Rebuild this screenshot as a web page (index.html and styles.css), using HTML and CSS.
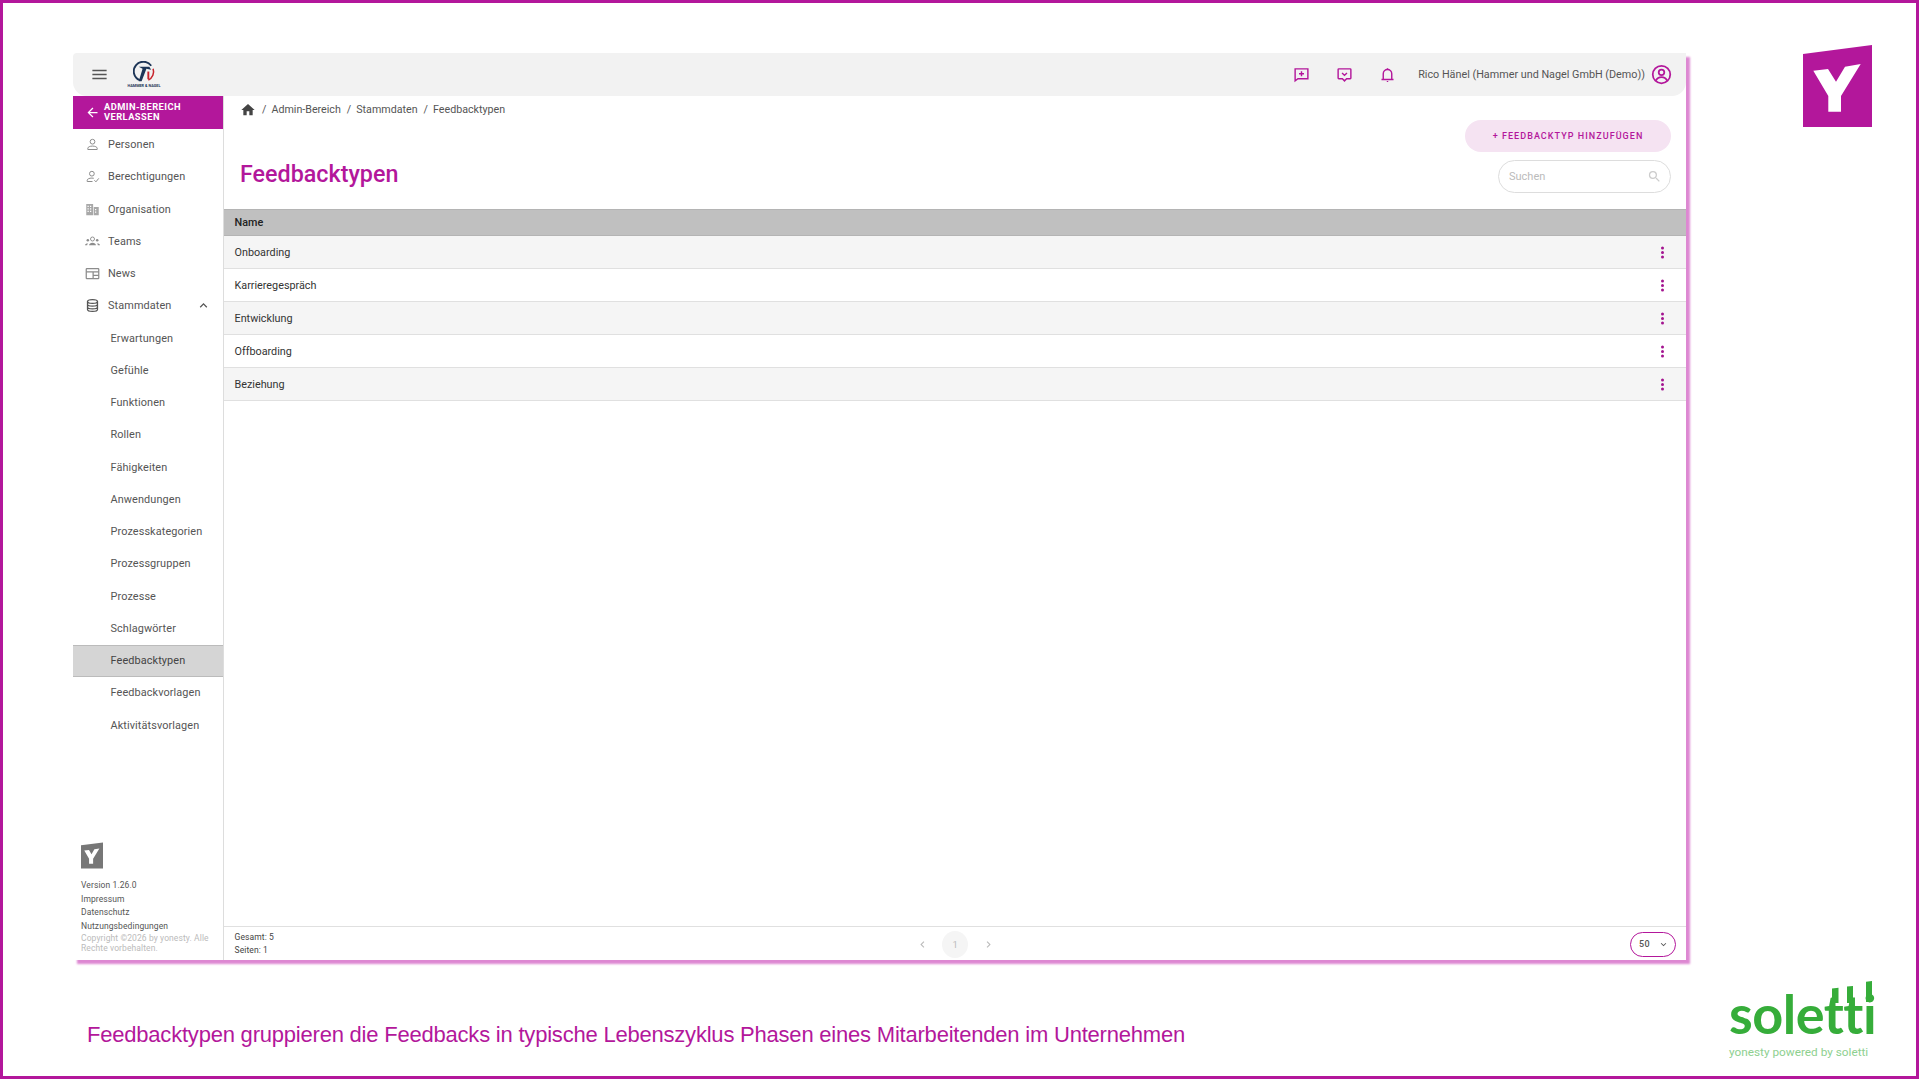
FILE: index.html
```html
<!DOCTYPE html>
<html lang="de">
<head>
<meta charset="utf-8">
<title>Feedbacktypen</title>
<link rel="stylesheet" href="styles.css">
</head>
<body>
<div class="slide">
  <div class="stage">
    <div class="app">
      <header class="topbar">
        <div class="topbar-left">
          <svg class="ico-menu" viewBox="0 0 24 24"><path d="M3 18h18v-2H3v2zm0-5h18v-2H3v2zm0-7v2h18V6H3z"/></svg>
          <div class="brand">
            <svg class="brand-mark" viewBox="0 0 24 24" fill="none">
              <path d="M7 20A10 10 0 1 1 19 5" stroke="#1d3557" stroke-width="2"/>
              <path d="M21 8a10 10 0 0 1-5 12" stroke="#c8242c" stroke-width="1.6"/>
              <path d="M6 6h11l2 3-5-1-5 13H6l4-13z" fill="#1d3557"/>
              <path d="M15 11h2v8h-2z" fill="#c8242c"/>
            </svg>
            <span class="brand-name">HAMMER &amp; NAGEL</span>
          </div>
        </div>
        <div class="topbar-right">
          <svg class="ico-top" viewBox="0 0 24 24" fill="none" stroke="currentColor" stroke-width="2"><path d="M3 4h18v14H7l-4 3z"/><path d="M12 7.500v7M8.500 11h7"/></svg>
          <svg class="ico-top" viewBox="0 0 24 24" fill="none" stroke="currentColor" stroke-width="2"><path d="M4 4h16a1 1 0 0 1 1 1v12a1 1 0 0 1-1 1h-5l-3 3-3-3H4a1 1 0 0 1-1-1V5a1 1 0 0 1 1-1z"/><path d="M8.500 10l3.500 3 3.500-3"/></svg>
          <svg class="ico-top" viewBox="0 0 24 24" fill="none" stroke="currentColor" stroke-width="2"><path d="M3.500 19h17M6 19v-8a6 6 0 0 1 12 0v8"/><path d="M12 3v2M12 21v1.500"/></svg>
          <span class="user-name">Rico Hänel (Hammer und Nagel GmbH (Demo))</span>
          <svg class="ico-user" viewBox="0 0 24 24" fill="none" stroke="currentColor" stroke-width="2"><circle cx="12" cy="12" r="10"/><circle cx="12" cy="9.500" r="3.200"/><path d="M5.500 19c1.500-3 4-4 6.500-4s5 1 6.500 4"/></svg>
        </div>
      </header>
      <div class="body">
        <aside class="sidebar">
          <a class="leave">
            <svg class="ico-leave" viewBox="0 0 24 24"><path d="M20 11H7.830l5.590-5.590L12 4l-8 8 8 8 1.410-1.410L7.830 13H20v-2z"/></svg>
            <span>ADMIN-BEREICH VERLASSEN</span>
          </a>
          <nav class="nav">
            <a class="nav-item">
              <svg class="ico-nav" viewBox="0 0 24 24" fill="none" stroke="currentColor" stroke-width="1.6"><circle cx="12" cy="7.500" r="3.800"/><path d="M4.500 20v-2c0-2 3.500-3.500 7.500-3.500s7.500 1.500 7.500 3.500v2z"/></svg>
              <span>Personen</span>
            </a>
            <a class="nav-item">
              <svg class="ico-nav" viewBox="0 0 24 24" fill="none" stroke="currentColor" stroke-width="1.6"><circle cx="11" cy="7.500" r="3.800"/><path d="M3.500 20v-2c0-2 3.500-3.500 7.500-3.500 1 0 2 .1 3 .3M3.500 20H12M15 18l2.500 2.500L22 15"/></svg>
              <span>Berechtigungen</span>
            </a>
            <a class="nav-item">
              <svg class="ico-nav" viewBox="0 0 24 24"><path d="M2 3h11v18H2zM14 8h8v13h-8z" fill="#a8a8a8"/><path d="M4 6h2v2H4zM8 6h2v2H8zM4 10h2v2H4zM8 10h2v2H8zM4 14h2v2H4zM8 14h2v2H8zM16 11h2v2h-2zM16 15h2v2h-2z" fill="#fff"/></svg>
              <span>Organisation</span>
            </a>
            <a class="nav-item">
              <svg class="ico-nav" viewBox="0 0 24 24" fill="currentColor"><circle cx="12" cy="8" r="3.200" fill="none" stroke="currentColor" stroke-width="1.500"/><circle cx="4.500" cy="10" r="2"/><circle cx="19.500" cy="10" r="2"/><path d="M6.500 18c0-2.500 2.500-4 5.500-4s5.500 1.500 5.500 4zM0 18c0-2 2-3 4-3l1 .3C4 16 3.500 17 3.500 18zM24 18c0-2-2-3-4-3l-1 .3c1 .7 1.500 1.700 1.500 2.700z"/></svg>
              <span>Teams</span>
            </a>
            <a class="nav-item">
              <svg class="ico-nav" viewBox="0 0 24 24" fill="none" stroke="currentColor" stroke-width="2"><rect x="2" y="4" width="20" height="16" rx="1"/><path d="M2 9.500h20M13 9.500V20M13 15h9"/></svg>
              <span>News</span>
            </a>
            <a class="nav-item nav-open">
              <svg class="ico-nav" viewBox="0 0 24 24" fill="none" stroke="currentColor" stroke-width="2"><ellipse cx="12" cy="5.500" rx="8" ry="3"/><path d="M4 5.500v13c0 1.700 3.600 3 8 3s8-1.300 8-3v-13M4 10c0 1.700 3.600 3 8 3s8-1.300 8-3M4 14.500c0 1.700 3.600 3 8 3s8-1.300 8-3"/></svg>
              <span>Stammdaten</span>
              <svg class="ico-chev" viewBox="0 0 24 24"><path d="M12 8l-6 6 1.410 1.410L12 10.830l4.590 4.580L18 14z"/></svg>
            </a>
            <a class="nav-sub">Erwartungen</a>
            <a class="nav-sub">Gefühle</a>
            <a class="nav-sub">Funktionen</a>
            <a class="nav-sub">Rollen</a>
            <a class="nav-sub">Fähigkeiten</a>
            <a class="nav-sub">Anwendungen</a>
            <a class="nav-sub">Prozesskategorien</a>
            <a class="nav-sub">Prozessgruppen</a>
            <a class="nav-sub">Prozesse</a>
            <a class="nav-sub">Schlagwörter</a>
            <a class="nav-sub is-active">Feedbacktypen</a>
            <a class="nav-sub">Feedbackvorlagen</a>
            <a class="nav-sub">Aktivitätsvorlagen</a>
          </nav>
          <div class="side-foot">
            <svg class="side-logo" viewBox="0 0 69 82"><path d="M0 9L69 0v82H0z" fill="#777"/><path d="M10.300 25.700L25 24l8 12.700L42 21.700 57.700 19 38 51v15.700H25.300V51z" fill="#fff"/></svg>
            <div class="foot-links">
              <span>Version 1.26.0</span>
              <span>Impressum</span>
              <span>Datenschutz</span>
              <span>Nutzungsbedingungen</span>
            </div>
            <p class="copyright">Copyright ©2026 by yonesty. Alle Rechte vorbehalten.</p>
          </div>
        </aside>
        <main class="main">
          <div class="crumbs">
            <svg class="ico-home" viewBox="0 0 24 24"><path d="M10 20v-6h4v6h5v-8h3L12 3 2 12h3v8z"/></svg>
            <span class="sep">/</span><span>Admin-Bereich</span>
            <span class="sep">/</span><span>Stammdaten</span>
            <span class="sep">/</span><span>Feedbacktypen</span>
          </div>
          <div class="head">
            <h1 class="title">Feedbacktypen</h1>
            <div class="actions">
              <button class="btn-add">+ FEEDBACKTYP HINZUFÜGEN</button>
              <div class="search">
                <span>Suchen</span>
                <svg class="ico-search" viewBox="0 0 24 24"><path d="M15.500 14h-.790l-.280-.270A6.470 6.470 0 0 0 16 9.500 6.500 6.500 0 1 0 9.500 16c1.610 0 3.090-.590 4.230-1.570l.270.280v.790l5 4.990L20.490 19l-4.990-5zm-6 0C7.010 14 5 11.990 5 9.500S7.010 5 9.500 5 14 7.010 14 9.500 11.990 14 9.500 14z"/></svg>
              </div>
            </div>
          </div>
          <div class="table">
            <div class="thead">Name</div>
            <div class="row"><span>Onboarding</span><i class="kebab"></i></div>
            <div class="row"><span>Karrieregespräch</span><i class="kebab"></i></div>
            <div class="row"><span>Entwicklung</span><i class="kebab"></i></div>
            <div class="row"><span>Offboarding</span><i class="kebab"></i></div>
            <div class="row"><span>Beziehung</span><i class="kebab"></i></div>
          </div>
          <footer class="pager">
            <div class="totals"><span>Gesamt: 5</span><span>Seiten: 1</span></div>
            <div class="pages">
              <svg class="ico-page" viewBox="0 0 24 24"><path d="M15.410 7.410L14 6l-6 6 6 6 1.410-1.410L10.830 12z"/></svg>
              <span class="page-num">1</span>
              <svg class="ico-page" viewBox="0 0 24 24"><path d="M10 6L8.590 7.410 13.170 12l-4.580 4.590L10 18l6-6z"/></svg>
            </div>
            <div class="size">
              <span>50</span>
              <svg class="ico-size" viewBox="0 0 24 24"><path d="M16.590 8.590L12 13.170 7.410 8.590 6 10l6 6 6-6z"/></svg>
            </div>
          </footer>
        </main>
      </div>
    </div>
    <p class="caption">Feedbacktypen gruppieren die Feedbacks in typische Lebenszyklus Phasen eines Mitarbeitenden im Unternehmen</p>
  </div>
  <aside class="brand-col">
    <svg class="y-logo" viewBox="0 0 69 82"><path d="M0 9L69 0v82H0z" fill="#b3179b"/><path d="M10.300 25.700L25 24l8 12.700L42 21.700 57.700 19 38 51v15.700H25.300V51z" fill="#fff"/></svg>
    <div class="soletti">
      <svg class="soletti-stems" viewBox="0 0 143 30"><path d="M103 7.500l6.500-.7V22H103zM118 5.500l6-.6V22h-6zM137 .8l6-.8v21h-6z" fill="#36ad3a"/></svg>
      <span class="soletti-word">soletti</span>
      <span class="soletti-sub">yonesty powered by soletti</span>
    </div>
  </aside>
</div>
</body>
</html>
```
FILE: styles.css
```css
* { box-sizing: border-box; }
html, body { margin: 0; padding: 0; background: #fff; }
body { font-family: Roboto, "Liberation Sans", sans-serif; color: #555; }
.slide {
  width: 1919px; height: 1079px;
  border: 3px solid #b3179b;
  display: flex; justify-content: space-between;
  padding: 0 44px 0 70px;
  overflow: hidden;
}
.stage { width: 1613px; padding-top: 50px; display: flex; flex-direction: column; }
.app {
  height: 907px; display: flex; flex-direction: column;
  box-shadow: 4px 4px 2px #dd88d2;
  background: #fff;
}
.caption {
  margin: 60.500px 0 0 14px;
  font: 400 22px/28px "Liberation Sans", sans-serif;
  letter-spacing: -.21px;
  color: #b3179b;
  white-space: nowrap;
}

/* top bar */
.topbar {
  height: 43px; flex: none; background: #f2f2f2;
  border-radius: 4px 0 14px 14px;
  display: flex; align-items: center; justify-content: space-between;
}
.topbar-left { display: flex; align-items: center; padding-left: 17px; gap: 18px; }
.ico-menu { width: 19px; height: 19px; fill: #555; }
.brand { display: flex; flex-direction: column; align-items: center; width: 34px; }
.brand-mark { width: 23px; height: 23px; margin-bottom: -1px; }
.brand-name { font-size: 3.800px; line-height: 5px; font-weight: 700; color: #1d3557; white-space: nowrap; }
.topbar-right { display: flex; align-items: center; padding-right: 14px; color: #b3179b; }
.ico-top { width: 17px; height: 17px; margin-right: 26px; }
.ico-top:nth-child(3) { margin-right: 22px; }
.user-name { font-size: 10.800px; color: #555; margin-right: 6px; white-space: nowrap; }
.ico-user { width: 21px; height: 21px; }

.body { flex: 1; min-height: 0; display: flex; }

/* sidebar */
.sidebar {
  width: 151px; flex: none; border-right: 1px solid #ddd;
  display: flex; flex-direction: column;
}
.leave {
  height: 32.500px; flex: none; background: #b3179b; color: #fff;
  display: flex; align-items: center;
  padding-left: 12px; gap: 4px;
  font-size: 9.300px; line-height: 10.500px; font-weight: 700; letter-spacing: .45px;
}
.ico-leave { width: 15px; height: 15px; fill: #fff; flex: none; }
.nav { display: flex; flex-direction: column; }
.nav-item {
  height: 32.250px; display: flex; align-items: center;
  padding-left: 12px; font-size: 10.900px; letter-spacing: .1px; color: #555;
}
.ico-nav { width: 15px; height: 15px; margin-right: 8px; color: #8c8c8c; flex: none; }
.nav-open .ico-nav { color: #555; }
.ico-chev { width: 15px; height: 15px; margin-left: auto; margin-right: 12px; fill: #555; }
.nav-sub {
  height: 32.250px; display: flex; align-items: center;
  padding-left: 37.500px; font-size: 10.900px; letter-spacing: .1px; color: #555;
}
.is-active { background: #d5d5d5; color: #444; box-shadow: inset 0 1px 0 #bbb, inset 0 -1px 0 #bbb; }
.side-foot { margin-top: auto; padding: 0 8px 7px; }
.side-logo { width: 22px; height: 27px; display: block; margin-bottom: 10px; }
.foot-links { display: flex; flex-direction: column; font-size: 8.500px; line-height: 13.500px; color: #555; letter-spacing: .1px; }
.copyright { margin: 0; font-size: 8.500px; line-height: 10px; color: #bbb; letter-spacing: .1px; }

/* main */
.main { flex: 1; min-width: 0; display: flex; flex-direction: column; }
.crumbs {
  height: 24px; flex: none; display: flex; align-items: center;
  padding: 3px 0 0 16px; font-size: 10.700px; color: #555; gap: 5px;
}
.ico-home { width: 16px; height: 16px; fill: #444; }
.sep { margin-left: 1px; }
.head { height: 89px; flex: none; display: flex; justify-content: space-between; padding: 0 15px 16px 16px; align-items: flex-end; }
.title { margin: 0 0 5px; font-size: 23.300px; line-height: 28px; font-weight: 500; color: #b3179b; }
.actions { display: flex; flex-direction: column; align-items: flex-end; gap: 8px; }
.btn-add {
  width: 206px; height: 32px; border: 0; border-radius: 16px;
  background: #f5e3f2; color: #b3179b;
  font: 500 9px/1 Roboto, sans-serif; letter-spacing: 1.050px;
}
.search {
  width: 173px; height: 33px; border: 1px solid #ddd; border-radius: 16.500px;
  display: flex; align-items: center; justify-content: space-between;
  padding: 0 8px 0 10px; font-size: 11px; color: #bbb; background: #fff;
}
.ico-search { width: 15px; height: 15px; fill: #ccc; }
.table { flex: 1; min-height: 0; }
.thead {
  height: 27px; background: #c0c0c0; border-top: 1px solid #b4b4b4; border-bottom: 1px solid #b4b4b4;
  display: flex; align-items: center; padding-left: 10.500px;
  font-size: 10.800px; font-weight: 500; color: #222;
}
.row {
  height: 33px; display: flex; align-items: center; justify-content: space-between;
  padding: 0 22px 0 10.500px; font-size: 10.800px; color: #333;
  border-bottom: 1px solid #e0e0e0;
}
.row:nth-child(even) { background: #f5f5f5; }
.kebab {
  width: 3px; height: 3px; border-radius: 50%; background: #a3148f;
  box-shadow: 0 -4.500px 0 #a3148f, 0 4.500px 0 #a3148f;
}
.pager {
  height: 34px; flex: none; border-top: 1px solid #e0e0e0;
  display: grid; grid-template-columns: 1fr auto 1fr; align-items: center;
  padding: 1px 10px 0 10.500px;
}
.totals { display: flex; flex-direction: column; font-size: 8.500px; line-height: 13.500px; color: #444; letter-spacing: .1px; }
.pages { display: flex; align-items: center; gap: 13.500px; }
.ico-page { width: 13px; height: 13px; fill: #bbb; }
.page-num {
  width: 26px; height: 27px; border-radius: 50%; background: #f5f5f5;
  display: flex; align-items: center; justify-content: center;
  font-size: 9.500px; color: #bbb;
}
.size {
  justify-self: end; width: 46px; height: 25px; border: 1px solid #b3179b; border-radius: 12.500px;
  display: flex; align-items: center; justify-content: space-between; padding: 0 6px 0 8px;
  font-size: 9px; font-weight: 500; letter-spacing: .5px; color: #555;
}
.ico-size { width: 11px; height: 11px; fill: #555; }

/* right brand column */
.brand-col {
  width: 143px; flex: none; padding: 42px 0 16px;
  display: flex; flex-direction: column; justify-content: space-between; align-items: flex-end;
}
.y-logo { width: 69px; height: 82px; display: block; }
.soletti { position: relative; display: flex; flex-direction: column; width: 143px; }
.soletti-stems { position: absolute; left: 0; top: -6px; width: 143px; height: 30px; }
.soletti-word { font: 700 54px/54px Lato, sans-serif; color: #36ad3a; letter-spacing: -.5px; }
.soletti-sub { font-size: 11.800px; line-height: 15px; color: #8ed08f; margin-top: 4px; white-space: nowrap; }
```
